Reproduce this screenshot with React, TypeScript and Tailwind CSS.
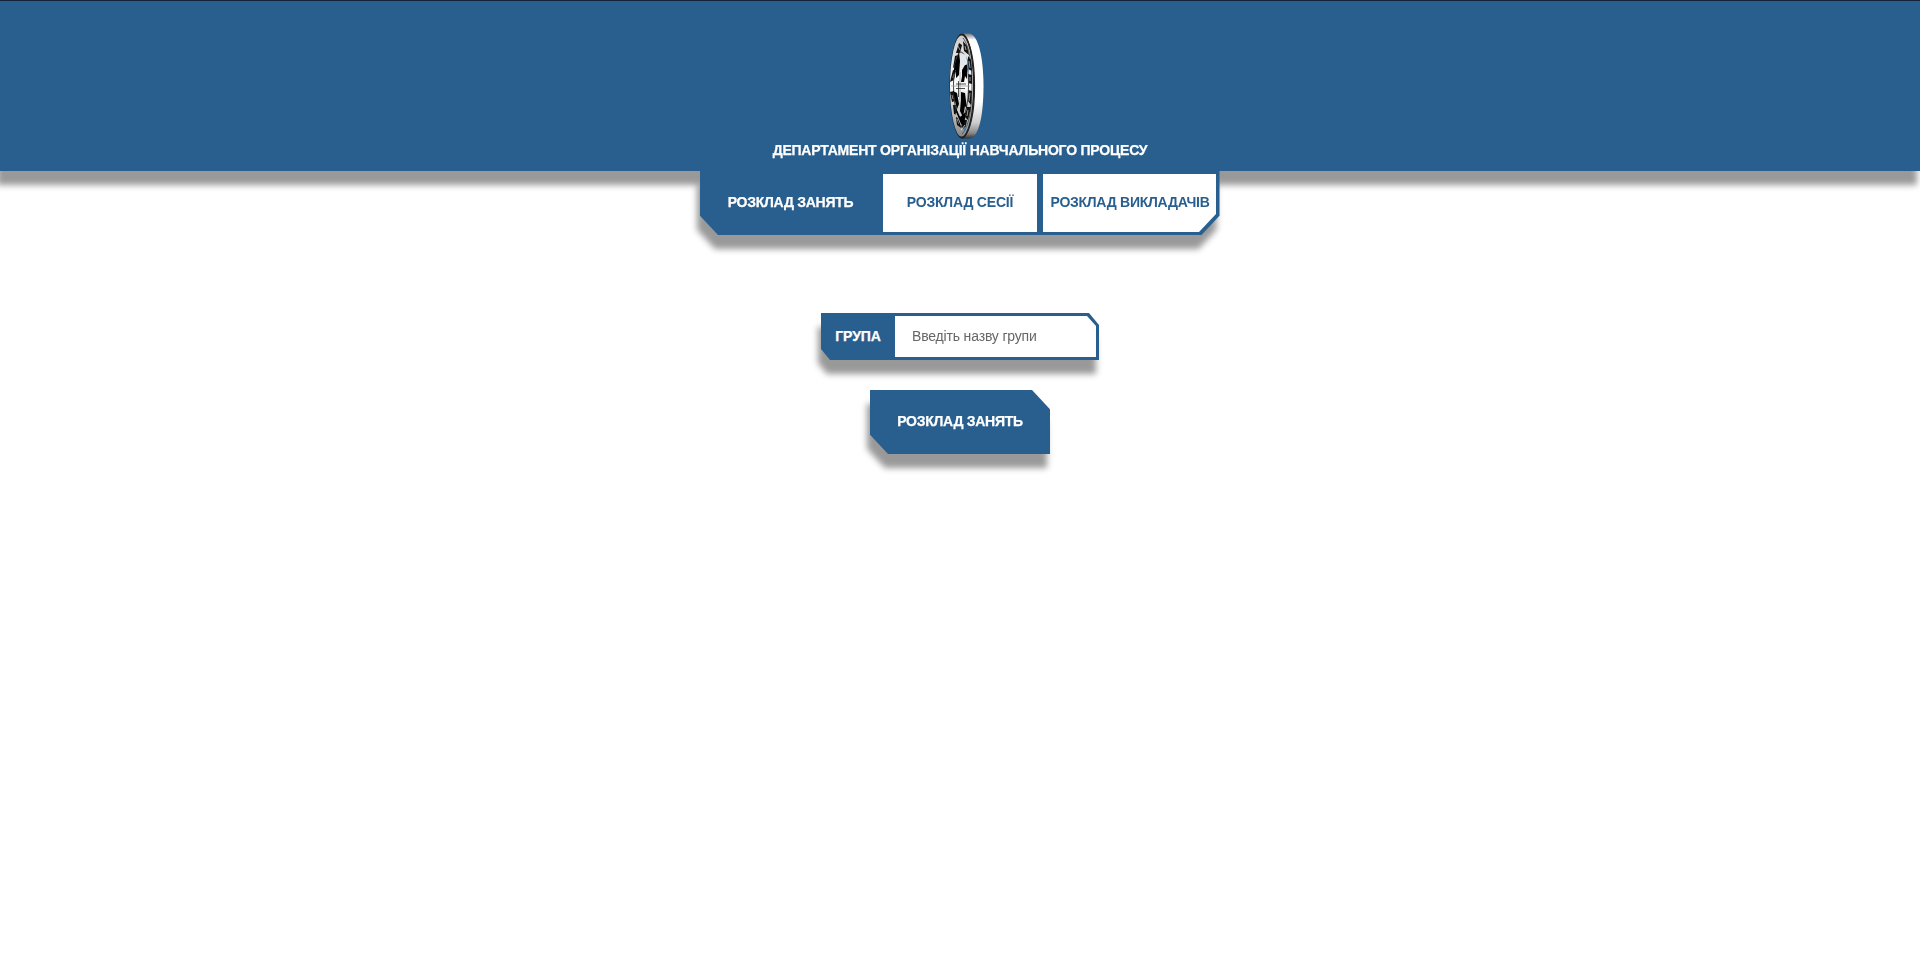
const shadow = "drop-shadow-[-3px_14px_3px_rgba(0,0,0,0.4)]";
const boldText = "font-bold [-webkit-text-stroke:0.25px_currentColor]";

function Emblem() {
  return (
    <svg className="block h-[108px] w-[36px]" viewBox="0 0 36 108">
      <defs>
        <linearGradient id="rim" x1="0" y1="0" x2="0" y2="1">
          <stop offset="0" stopColor="#777" />
          <stop offset="0.06" stopColor="#fff" />
          <stop offset="0.65" stopColor="#fff" />
          <stop offset="0.85" stopColor="#ccc" />
          <stop offset="0.95" stopColor="#888" />
          <stop offset="1" stopColor="#333" />
        </linearGradient>
        <linearGradient id="face" x1="0" y1="0" x2="0" y2="1">
          <stop offset="0" stopColor="#ccc" />
          <stop offset="0.5" stopColor="#fff" />
          <stop offset="1" stopColor="#888" />
        </linearGradient>
      </defs>
      <path d="M12 1.500H20C29 2 34.500 25 34.500 54S30 106 20 106.500H12Z" fill="url(#rim)" />
      <ellipse cx="13" cy="54" rx="12.500" ry="52.500" fill="#222" />
      <ellipse cx="12.500" cy="54" rx="11.500" ry="50.500" fill="url(#face)" />
      <path d="M14 2C22 9 25.500 31 25.500 54S22 98 14 106" fill="none" stroke="#222" strokeWidth="1.200" />
      <path d="M14 6C20 13 23 32 23 54S20 95 13 102" fill="none" stroke="#555" strokeWidth="1" />
      <path d="M10 11L13 13L11 21L7 21ZM14 9L18 14L20 23L15 19ZM6 24L9 23L7 34L4 36ZM19 24L22 28L23 39L19 37ZM4 38L7 39L5 48L1 50ZM19 42L23 43V52L19 51ZM1 60L5 59L6 69L3 70ZM19 58L23 59L22 73L19 69ZM4 73L7 73L9 83L5 82ZM18 75L22 75L19 88L16 85ZM7 85L11 87L12 96L8 93ZM15 88L18 88L16 98L12 95Z" fill="#111" />
      <path d="M9 14L11 18M16 14L17 18M20 29L21 36M5 42L4 46M21 45V49M3 63L4 67M21 61L20 69M19 78L18 84M8 87L10 92" stroke="#bbb" strokeWidth="0.800" />
      <ellipse cx="12" cy="53" rx="7.500" ry="33" fill="none" stroke="#444" strokeWidth="1" />
      <path d="M10 20L6 32L4 43L7 38L7 46L10 43L11 29ZM13 38L16 33H18V47L16 44L15 50L12 50L13 44ZM4 59L8 61L10 72L8 77L6 69ZM12 60L16 61L18 77L16 74L14 85L11 79L12 67ZM6 74L11 85L17 80L15 93L10 92Z" fill="#000" />
      <path d="M2 54H21M11 40V68" stroke="#999" strokeWidth="0.800" />
      <path d="M7 52H17M7 56.500H16M9.500 49V65" stroke="#222" strokeWidth="0.800" />
      <path d="M11 24C14 20 17 22 18 28V32L15 33L12 37Z" fill="#e0e8ee" />
      <path d="M17 24C18 27 18.500 30 18 35L20 41L19 28Z" fill="#3979ad" />
      <path d="M14 96L18 94L16 99Z" fill="#3f82b7" />
      <path d="M7 81L12 93M9 77L12 84M12 98L16 93" stroke="#ddd" strokeWidth="0.800" />
    </svg>
  );
}

export default function App() {
  return (
    <div className="min-h-[970px] bg-white font-['Liberation_Sans',Arial,sans-serif] text-[14px] leading-4">
      <header className={`relative flex h-[171px] flex-col items-center border-t border-[#14233c] bg-[#285f8f] ${shadow}`}>
        <div className="mt-[31px] ml-[14px]">
          <Emblem />
        </div>
        <h1 className={`mt-[2px] whitespace-nowrap text-white tracking-[-0.21px] ${boldText}`}>ДЕПАРТАМЕНТ ОРГАНІЗАЦІЇ НАВЧАЛЬНОГО ПРОЦЕСУ</h1>
      </header>
      <nav className={`relative mx-auto h-16 w-[520px] ${shadow}`}>
        <div className="flex h-16 bg-[#285f8f] pt-[3px] pr-1 pb-[3px] [clip-path:polygon(0_0,519.500px_0,519.500px_70%,501.500px_100%,18px_100%,0_70%)]">
          <button className={`w-[183px] pr-[2px] pb-[2px] tracking-[-0.26px] text-white ${boldText}`}>РОЗКЛАД ЗАНЯТЬ</button>
          <button className="w-[154px] bg-white pb-[2px] font-bold tracking-[-0.2px] text-[#285f8f]">РОЗКЛАД СЕСІЇ</button>
          <button className="ml-[6px] w-[173px] bg-white pb-[2px] pl-px font-bold tracking-[-0.26px] whitespace-nowrap text-[#285f8f] [clip-path:polygon(0_0,100%_0,100%_40px,156px_100%,0_100%)]">РОЗКЛАД ВИКЛАДАЧІВ</button>
        </div>
      </nav>
      <main className="flex flex-col items-center pt-[78px]">
        <div className={shadow}>
          <label className="flex h-[47px] w-[278px] bg-[#285f8f] py-[3px] pr-[3px] [clip-path:polygon(0_0,268px_0,100%_12px,100%_100%,9px_100%,0_36px)]">
            <span className={`flex w-[74px] items-center justify-center pb-[2px] tracking-[-0.1px] text-white ${boldText}`}>ГРУПА</span>
            <input className="w-[201px] bg-white pb-[2px] pl-[17px] tracking-[-0.17px] outline-none placeholder:text-[#666] [clip-path:polygon(0_0,192px_0,100%_10px,100%_100%,0_100%)]" placeholder="Введіть назву групи" />
          </label>
        </div>
        <div className={`mt-[30px] ${shadow}`}>
          <button className={`block h-16 w-[180px] bg-[#285f8f] pb-[2px] tracking-[-0.26px] text-white [clip-path:polygon(0_0,90%_0,100%_30%,100%_100%,10%_100%,0_70%)] ${boldText}`}>РОЗКЛАД ЗАНЯТЬ</button>
        </div>
      </main>
    </div>
  );
}
